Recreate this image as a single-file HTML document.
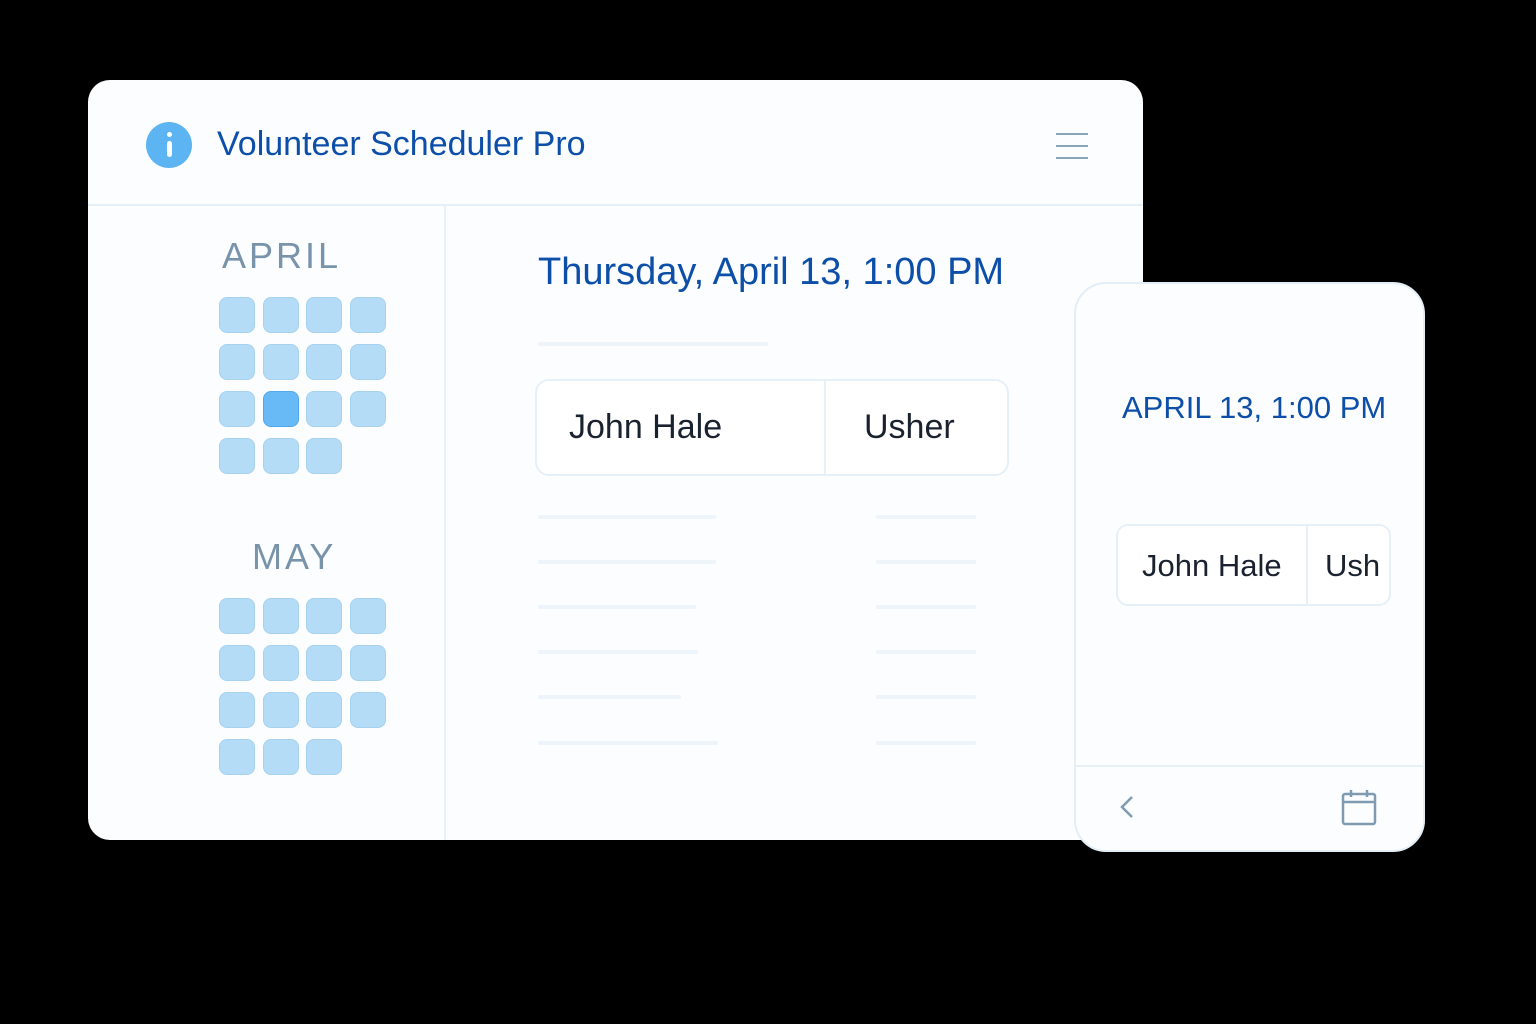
<!DOCTYPE html>
<html><head><style>
body{margin:0;width:1536px;height:1024px;background:#000;position:relative;overflow:hidden;font-family:"Liberation Sans",sans-serif}
.card{position:absolute;left:88px;top:80px;width:1055px;height:760px;background:#fbfdff;border-radius:22px}
.a{position:absolute}
.c{position:absolute;width:36px;height:36px;border-radius:8px;background:#b4dcf7;border:1px solid #a6d2f0;box-sizing:border-box}
.ln{position:absolute;height:4px;background:#edf4fa;border-radius:2px}
</style></head><body>
<div class="card">
 <div class="a" style="left:58px;top:42px;width:46px;height:46px;border-radius:50%;background:#5db4f2"></div>
 <div class="a" style="left:79px;top:52px;width:5px;height:5px;border-radius:50%;background:#fff"></div>
 <div class="a" style="left:79px;top:61px;width:5px;height:16px;border-radius:3px;background:#fff"></div>
 <div class="a" style="left:129px;top:45px;font-size:34px;color:#0d4fa8">Volunteer Scheduler Pro</div>
 <div class="a" style="left:968px;top:53px;width:32px;height:2px;background:#8aa4b8;box-shadow:0 12px 0 #8aa4b8,0 24px 0 #8aa4b8"></div>
 <div class="a" style="left:0;top:124px;width:1055px;height:2px;background:#e6f0f8"></div>
 <div class="a" style="left:356px;top:126px;width:2px;height:634px;background:#e6f0f8"></div>
 <div class="a" style="left:134px;top:155px;font-size:36px;letter-spacing:3px;color:#7994aa">APRIL</div>
 <div class="a" style="left:164px;top:456px;font-size:36px;letter-spacing:3px;color:#7994aa">MAY</div>
 <div class="a" style="left:450px;top:171px;font-size:38px;color:#0d4fa8">Thursday, April 13, 1:00 PM</div>
 <div class="ln" style="left:450px;top:262px;width:230px"></div>
 <div class="a" style="left:447px;top:299px;width:470px;height:93px;border:2px solid #e6f0f8;border-radius:14px;background:#fff"></div>
 <div class="a" style="left:736px;top:301px;width:2px;height:93px;background:#e6f0f8"></div>
 <div class="a" style="left:481px;top:328px;font-size:34px;color:#1a2230">John Hale</div>
 <div class="a" style="left:776px;top:328px;font-size:34px;color:#1a2230">Usher</div>
 <div class="ln" style="left:450px;top:435px;width:178px"></div><div class="ln" style="left:788px;top:435px;width:100px"></div>
 <div class="ln" style="left:450px;top:480px;width:178px"></div><div class="ln" style="left:788px;top:480px;width:100px"></div>
 <div class="ln" style="left:450px;top:525px;width:158px"></div><div class="ln" style="left:788px;top:525px;width:100px"></div>
 <div class="ln" style="left:450px;top:570px;width:160px"></div><div class="ln" style="left:788px;top:570px;width:100px"></div>
 <div class="ln" style="left:450px;top:615px;width:143px"></div><div class="ln" style="left:788px;top:615px;width:100px"></div>
 <div class="ln" style="left:450px;top:661px;width:180px"></div><div class="ln" style="left:788px;top:661px;width:100px"></div>
</div>
<div id="g"></div>
<div class="a" style="left:1074px;top:282px;width:351px;height:570px;background:#fbfdff;border:2px solid #e3eef7;border-radius:32px;box-sizing:border-box">
 <div class="a" style="left:46px;top:106px;font-size:31px;color:#0d4fa8">APRIL 13, 1:00 PM</div>
 <div class="a" style="left:40px;top:240px;width:275px;height:82px;border:2px solid #e6f0f8;border-radius:12px;background:#fff;box-sizing:border-box"></div>
 <div class="a" style="left:230px;top:242px;width:2px;height:78px;background:#e6f0f8"></div>
 <div class="a" style="left:66px;top:264px;font-size:31px;color:#1a2230">John Hale</div>
 <div class="a" style="left:249px;top:264px;font-size:31px;color:#1a2230">Ush</div>
 <div class="a" style="left:0;top:481px;width:347px;height:2px;background:#e6f0f8"></div>
 <svg class="a" style="left:40px;top:508px" width="24" height="32"><path d="M16 5 L6 15 L16 25" fill="none" stroke="#7f9bb1" stroke-width="2.5"/></svg>
 <svg class="a" style="left:264px;top:504px" width="40" height="40"><rect x="3" y="6" width="32" height="30" rx="2" fill="none" stroke="#7f9bb1" stroke-width="2.5"/><path d="M3 14H35M11 2V9M27 2V9" stroke="#7f9bb1" stroke-width="2.5"/></svg>
</div>
<script>
var g=document.getElementById('g'),xs=[219,263,306,350];
function grid(y0,sel){for(var r=0;r<4;r++)for(var c=0;c<4;c++){if(r==3&&c==3)continue;var d=document.createElement('div');d.className='c';d.style.left=xs[c]+'px';d.style.top=(y0+r*47)+'px';if(sel&&r==2&&c==1){d.style.background='#68baf7';d.style.borderColor='#4fa8ea'}g.appendChild(d)}}
grid(297,1);grid(598,0);
</script>
</body></html>
